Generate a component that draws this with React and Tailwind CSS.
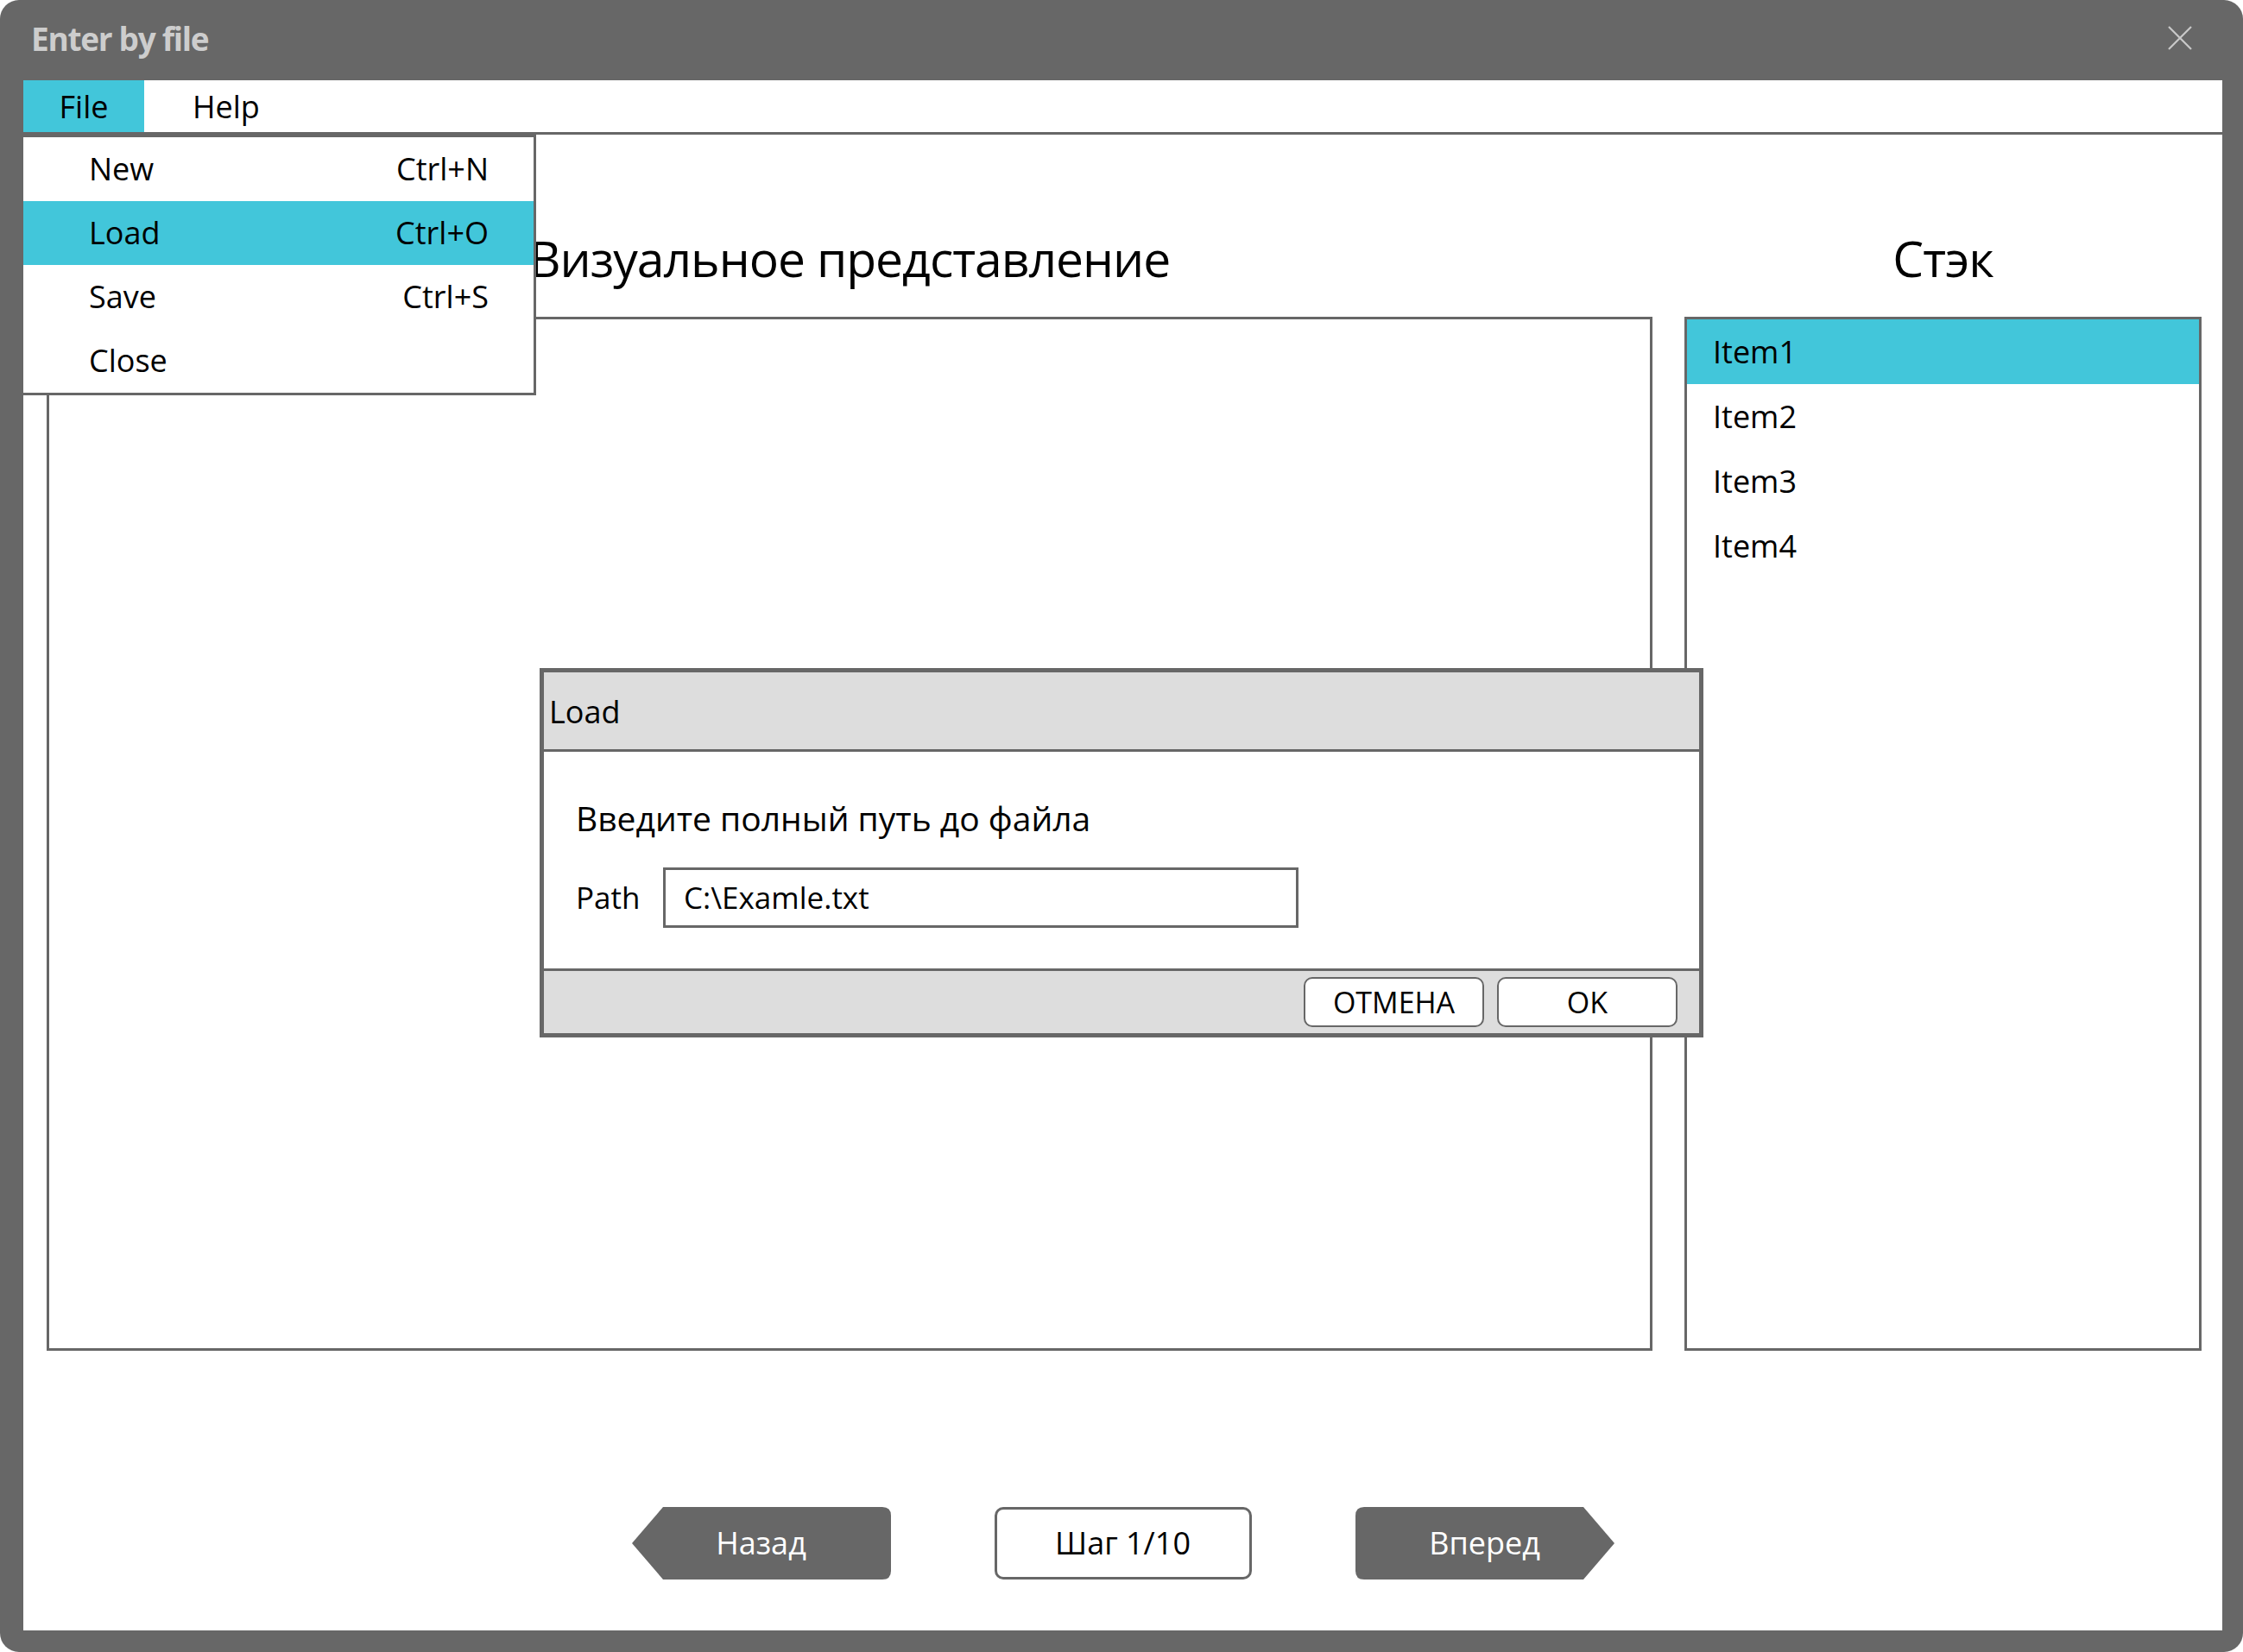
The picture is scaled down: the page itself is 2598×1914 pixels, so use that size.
import React from 'react';

function ArrowButton({ label, dir }) {
    const path = dir === 'left'
        ? 'M36 0 H290 Q300 0 300 10 V74 Q300 84 290 84 H36 L0 42 Z'
        : 'M10 0 H264 L300 42 L264 84 H10 Q0 84 0 74 V10 Q0 0 10 0 Z';
    return (
        <div className="relative w-[300px] h-[84px] flex items-center justify-center">
            <svg className="absolute inset-0" width="300" height="84" viewBox="0 0 300 84">
                <path d={path} fill="#676767" />
            </svg>
            <span className="relative text-white text-[36px]">{label}</span>
        </div>
    );
}

export default function App() {
    const menu = [
        { label: 'New', key: 'Ctrl+N' },
        { label: 'Load', key: 'Ctrl+O', active: true },
        { label: 'Save', key: 'Ctrl+S' },
        { label: 'Close', key: '' },
    ];
    const items = ['Item1', 'Item2', 'Item3', 'Item4'];

    return (
        <div className="w-[2598px] h-[1914px] bg-white font-['Open_Sans'] text-black">
            <div className="h-full rounded-[22px] bg-[#676767] flex flex-col">
                {/* title bar */}
                <div className="h-[93px] flex items-center justify-between pl-[36px] pr-[58px] shrink-0">
                    <span className="text-[37px] font-bold text-[#cdcdcd] tracking-[-1.3px] -mt-[4px]">Enter by file</span>
                    <svg width="30" height="30" viewBox="0 0 30 30" className="-mt-[6px]">
                        <path d="M2 2 L28 28 M28 2 L2 28" stroke="#c9c9c9" strokeWidth="2.2" />
                    </svg>
                </div>

                <div className="flex-1 flex flex-col ml-[27px] mr-[24px] mb-[25px] bg-white relative">
                    {/* menu bar */}
                    <div className="h-[63px] border-b-[3px] border-[#676767] flex text-[36px] shrink-0">
                        <div className="w-[140px] bg-[#42c6da] flex items-center justify-center pt-[2px]">File</div>
                        <div className="pl-[56px] flex items-center pt-[2px]">Help</div>
                    </div>

                    {/* panels */}
                    <div className="flex pl-[27px] pr-[24px] gap-[37px]">
                        <div className="w-[1860px] flex flex-col">
                            <div className="h-[211px] pt-[115px] text-center text-[57px] leading-none tracking-[-1px]">Визуальное представление</div>
                            <div className="h-[1198px] border-[3px] border-[#676767]" />
                        </div>
                        <div className="w-[599px] flex flex-col">
                            <div className="h-[211px] pt-[115px] text-center text-[57px] leading-none tracking-[-1px]">Стэк</div>
                            <div className="h-[1198px] border-[3px] border-[#676767] text-[36px]">
                                {items.map((it, i) => (
                                    <div key={it} className={`h-[75px] flex items-center pl-[30px] ${i === 0 ? 'bg-[#42c6da]' : ''}`}>{it}</div>
                                ))}
                            </div>
                        </div>
                    </div>

                    {/* step navigation */}
                    <div className="flex justify-center gap-[120px] mt-[181px] text-[36px]">
                        <ArrowButton label="Назад" dir="left" />
                        <div className="w-[298px] h-[84px] border-[3px] border-[#676767] rounded-[10px] flex items-center justify-center">Шаг 1/10</div>
                        <ArrowButton label="Вперед" dir="right" />
                    </div>

                    {/* File dropdown */}
                    <div className="absolute left-0 top-[63px] w-[594px] bg-white border-t-[3px] border-r-[3px] border-b-[3px] border-[#676767] text-[36px]">
                        {menu.map((m) => (
                            <div key={m.label} className={`h-[74px] flex items-center justify-between pl-[76px] pr-[52px] ${m.active ? 'bg-[#42c6da]' : ''}`}>
                                <span>{m.label}</span>
                                <span>{m.key}</span>
                            </div>
                        ))}
                    </div>

                    {/* Load dialog */}
                    <div className="absolute left-[598px] top-[681px] w-[1348px] h-[428px] border-[5px] border-[#676767] bg-white flex flex-col">
                        <div className="h-[92px] bg-[#dddddd] border-b-[3px] border-[#676767] flex items-center pl-[6px] text-[36px] pt-[3px]">Load</div>
                        <div className="flex-1 flex flex-col pl-[37px] text-[39px]">
                            <div className="mt-[57px] leading-none">Введите полный путь до файла</div>
                            <div className="flex items-center mt-[38px]">
                                <span className="w-[101px] text-[35px]">Path</span>
                                <div className="w-[736px] h-[70px] border-[3px] border-[#676767] flex items-center pl-[21px] text-[35px]">C:\Examle.txt</div>
                            </div>
                        </div>
                        <div className="h-[75px] bg-[#dddddd] border-t-[3px] border-[#676767] flex items-center justify-end gap-[15px] pr-[25px] text-[34px]">
                            <div className="w-[209px] h-[58px] bg-white border-[2px] border-[#676767] rounded-[10px] flex items-center justify-center">ОТМЕНА</div>
                            <div className="w-[209px] h-[58px] bg-white border-[2px] border-[#676767] rounded-[10px] flex items-center justify-center">OK</div>
                        </div>
                    </div>
                </div>
            </div>
        </div>
    );
}
